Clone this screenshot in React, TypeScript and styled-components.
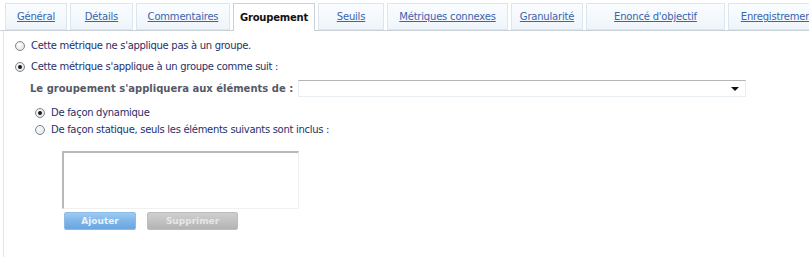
import React from 'react';
import styled, { createGlobalStyle } from 'styled-components';

const GlobalStyle = createGlobalStyle`
  html, body {
    margin: 0;
    padding: 0;
    background: #ffffff;
    font-family: "DejaVu Sans", Verdana, sans-serif;
    font-size: 10px;
    overflow: hidden;
  }
`;

const Page = styled.div`
  width: 809px;
  height: 257px;
  padding-top: 3px;
  box-sizing: border-box;
  overflow: hidden;
`;

const TabBar = styled.div`
  display: flex;
  gap: 3px;
  padding-left: 5px;
  border-bottom: 1px solid #c9d0d6;
  height: 27px;
  white-space: nowrap;
`;

const Tab = styled.div<{ $w: number; $active?: boolean }>`
  flex: 0 0 ${(p) => p.$w}px;
  height: ${(p) => (p.$active ? 28 : 27)}px;
  box-sizing: border-box;
  display: flex;
  align-items: center;
  justify-content: center;
  border: 1px solid ${(p) => (p.$active ? '#c9d0d6' : '#dbe6ee')};
  border-bottom: ${(p) => (p.$active ? 'none' : '1px solid #dbe6ee')};
  background: ${(p) => (p.$active ? '#ffffff' : 'linear-gradient(#fbfdff, #eef5fa)')};
  color: ${(p) => (p.$active ? '#111111' : '#3a63b0')};
  font-weight: ${(p) => (p.$active ? 'bold' : 'normal')};
  text-decoration: ${(p) => (p.$active ? 'none' : 'underline')};
  font-size: 10px;
  letter-spacing: -0.2px;
  overflow: hidden;
`;

const Panel = styled.div`
  margin-left: 3px;
  border-left: 1px solid #e2e5e8;
  height: 226px;
  padding: 6px 0 0 10px;
  box-sizing: border-box;
  color: #28306a;
  letter-spacing: -0.3px;
`;

const RadioRow = styled.label<{ $indent?: number }>`
  display: flex;
  align-items: center;
  gap: 6px;
  height: 17px;
  padding-left: ${(p) => p.$indent ?? 1}px;
  margin-bottom: ${(p) => (p.$indent ? 0 : 4)}px;
`;

const Radio = styled.span<{ $on?: boolean }>`
  width: 10px;
  height: 10px;
  box-sizing: border-box;
  border-radius: 50%;
  border: 1px solid #7f868e;
  background: radial-gradient(circle at 40% 40%, #ffffff, #d8dde3);
  display: flex;
  align-items: center;
  justify-content: center;
  &::after {
    content: '';
    display: ${(p) => (p.$on ? 'block' : 'none')};
    width: 4px;
    height: 4px;
    border-radius: 50%;
    background: #1a1a1a;
  }
`;

const GroupRow = styled.div`
  display: flex;
  align-items: center;
  padding-left: 16px;
  margin: 5px 0 7px;
`;

const GroupLabel = styled.span`
  font-weight: bold;
  color: #555a66;
  width: 268px;
  font-size: 10px;
  letter-spacing: 0;
  white-space: nowrap;
`;

const Select = styled.div`
  width: 448px;
  height: 17px;
  box-sizing: border-box;
  border: 1px solid #e8edf2;
  border-top-color: #b5b5b5;
  background: #fff;
  display: flex;
  align-items: center;
  justify-content: flex-end;
  padding-right: 6px;
`;

const Arrow = styled.span`
  width: 0;
  height: 0;
  border-left: 4px solid transparent;
  border-right: 4px solid transparent;
  border-top: 4px solid #111;
`;

const ListBox = styled.div`
  margin: 13px 0 0 48px;
  width: 237px;
  height: 58px;
  box-sizing: border-box;
  border: 1px solid #f0f0f0;
  border-top: 2px solid #b8b8b8;
  border-left: 2px solid #b8b8b8;
`;

const Buttons = styled.div`
  display: flex;
  gap: 11px;
  margin: 3px 0 0 50px;
`;

const Button = styled.div<{ $w: number; $primary?: boolean }>`
  width: ${(p) => p.$w}px;
  height: 18px;
  border-radius: 2px;
  display: flex;
  align-items: center;
  justify-content: center;
  font-weight: bold;
  font-size: 9px;
  letter-spacing: 0;
  color: ${(p) => (p.$primary ? '#e8f2fc' : '#e6e6e6')};
  background: ${(p) =>
    p.$primary
      ? 'linear-gradient(#9fcbf0, #7db5e8 50%, #6aa6e0)'
      : 'linear-gradient(#cfcfcf, #c2c2c2 50%, #b3b3b3)'};
  border: 1px solid ${(p) => (p.$primary ? '#8dbbe6' : '#bdbdbd')};
  box-sizing: border-box;
`;

const tabs: { label: string; w: number; active?: boolean }[] = [
  { label: 'Général', w: 62 },
  { label: 'Détails', w: 63 },
  { label: 'Commentaires', w: 94 },
  { label: 'Groupement', w: 82, active: true },
  { label: 'Seuils', w: 66 },
  { label: 'Métriques connexes', w: 121 },
  { label: 'Granularité', w: 72 },
  { label: "Enoncé d'objectif", w: 139 },
  { label: 'Enregistrement', w: 100 },
];

export default function App() {
  return (
    <Page>
      <GlobalStyle />
      <TabBar>
        {tabs.map((t) => (
          <Tab key={t.label} $w={t.w} $active={t.active}>
            {t.label}
          </Tab>
        ))}
      </TabBar>
      <Panel>
        <RadioRow>
          <Radio />
          Cette métrique ne s'applique pas à un groupe.
        </RadioRow>
        <RadioRow>
          <Radio $on />
          Cette métrique s'applique à un groupe comme suit :
        </RadioRow>
        <GroupRow>
          <GroupLabel>Le groupement s'appliquera aux éléments de :</GroupLabel>
          <Select>
            <Arrow />
          </Select>
        </GroupRow>
        <RadioRow $indent={21}>
          <Radio $on />
          De façon dynamique
        </RadioRow>
        <RadioRow $indent={21}>
          <Radio />
          De façon statique, seuls les éléments suivants sont inclus :
        </RadioRow>
        <ListBox />
        <Buttons>
          <Button $w={72} $primary>Ajouter</Button>
          <Button $w={91}>Supprimer</Button>
        </Buttons>
      </Panel>
    </Page>
  );
}
